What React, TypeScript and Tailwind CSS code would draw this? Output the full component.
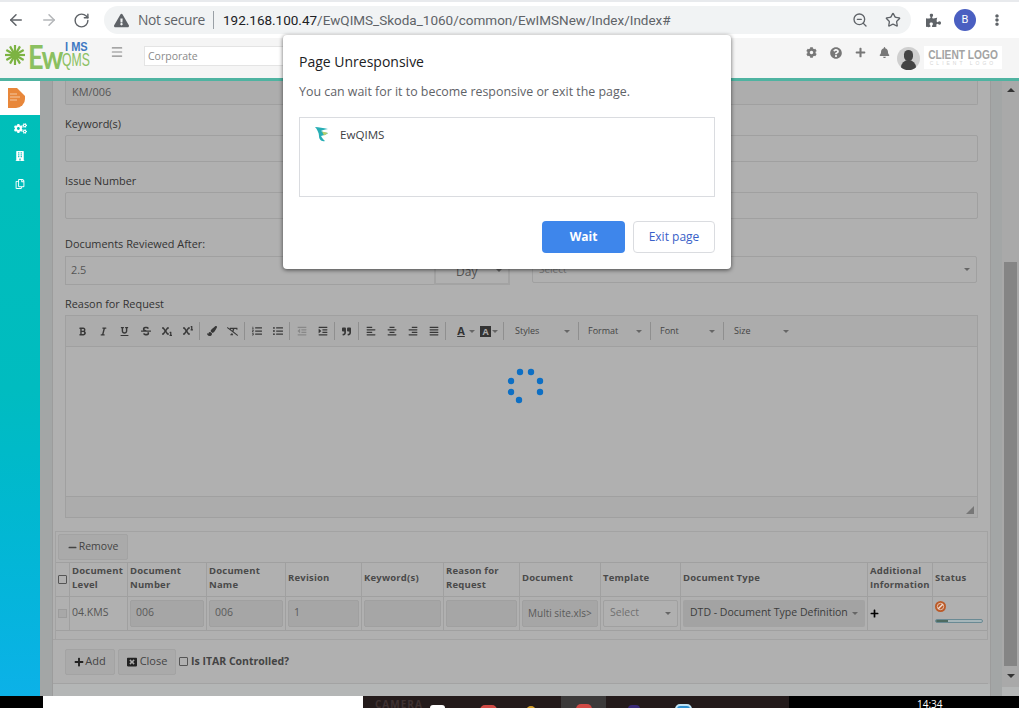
import React from "react";
import { ArrowLeft, ArrowRight, RotateCw, ZoomOut, Star, Menu } from "lucide-react";
import {
  FaCog, FaCogs, FaBuilding, FaRegCopy, FaQuestionCircle, FaPlus, FaBell, FaBold, FaItalic, FaUnderline,
  FaStrikethrough, FaSubscript, FaSuperscript, FaPaintBrush, FaRemoveFormat, FaListOl, FaListUl, FaOutdent,
  FaIndent, FaQuoteRight, FaAlignLeft, FaAlignCenter, FaAlignRight, FaAlignJustify, FaMinus, FaWindowClose,
  FaPuzzlePiece, FaExclamationTriangle, FaEllipsisV,
} from "react-icons/fa";

const Caret = ({ className = "" }: { className?: string }) => (
  <span className={"inline-block w-0 h-0 border-x-[3px] border-x-transparent border-t-[3px] border-t-[#666] " + className} />
);

const Sep = () => <span className="w-px h-[18px] bg-[#8f8f8f] mx-[1px]" />;

const Tool = ({ children }: { children: React.ReactNode }) => (
  <span className="w-[21px] flex justify-center text-[#383838]">{children}</span>
);

const Combo = ({ label, cls }: { label: string; cls: string }) => (
  <span className={"flex items-center justify-between pr-[7px] text-[9px] text-[#444] " + cls}>
    {label}
    <Caret />
  </span>
);

const Head = ({ w, children }: { w: string; children?: React.ReactNode }) => (
  <div className={"shrink-0 flex items-center px-[2px] pb-[3px] border-r border-[#a0a0a0] text-[9.5px] leading-[14px] font-bold text-[#4a4a4a] tracking-[0.2px] " + w}>
    <span>{children}</span>
  </div>
);

const Cell = ({ w, children }: { w: string; children?: React.ReactNode }) => (
  <div className={"shrink-0 flex items-center px-[2px] pb-[1px] border-r border-[#a0a0a0] " + w}>{children}</div>
);

const Disabled = ({ children }: { children?: React.ReactNode }) => (
  <div className="w-full h-[27px] rounded-[2px] bg-[#a6a6a6] border border-[#a0a0a0] px-[5px] flex items-center text-[#5a5a5a] overflow-hidden whitespace-nowrap">
    {children}
  </div>
);

export default function App() {
  return (
    <div className="relative w-[1019px] h-[708px] overflow-hidden flex flex-col bg-white font-['Open_Sans',sans-serif]">
      {/* Browser toolbar */}
      <div className="h-[2px] bg-[#e8eaed]" />
      <div className="h-[36px] bg-white flex items-center">
        <ArrowLeft size={18} strokeWidth={2} className="ml-[7px] text-[#5f6368]" />
        <ArrowRight size={18} strokeWidth={2} className="ml-[15px] text-[#b4b6b9]" />
        <RotateCw size={17} strokeWidth={2} className="ml-[15px] text-[#5f6368]" />
        <div className="ml-[14px] w-[807px] h-[28px] rounded-full bg-[#f1f3f4] flex items-center pl-[10px] pr-[8px]">
          <FaExclamationTriangle size={15} className="text-[#5f6368]" />
          <span className="ml-[9px] text-[13.8px] text-[#5f6368] font-['Open_Sans',sans-serif] tracking-[-0.3px]">Not secure</span>
          <span className="ml-[8px] mr-[9px] w-px h-[18px] bg-[#9aa0a6]" />
          <span className="text-[13.5px] text-[#5f6368] font-['Roboto',sans-serif] whitespace-nowrap">
            <span className="text-[#202124]">192.168.100.47</span>/EwQIMS_Skoda_1060/common/EwIMSNew/Index/Index#
          </span>
          <ZoomOut size={16} className="ml-auto text-[#5f6368]" />
          <Star size={16} strokeWidth={2} className="ml-[17px] mr-[2px] text-[#5f6368]" />
        </div>
        <FaPuzzlePiece size={15} className="ml-[15px] text-[#5f6368]" />
        <div className="ml-[13px] w-[22px] h-[22px] rounded-full bg-[#4a5fc1] text-white text-[11px] flex items-center justify-center font-['Roboto',sans-serif]">B</div>
        <FaEllipsisV size={12} className="ml-[15px] text-[#5f6368]" />
      </div>

      {/* App header */}
      <div className="h-[43px] bg-[#f5f5f5] border-b-[3px] border-[#4fb3a1] flex items-start shrink-0">
        <div className="relative w-[100px] h-[40px] overflow-hidden">
          <svg width="26" height="26" viewBox="-13 -13 26 26" className="absolute left-[2px] top-[4px]">
            {[0, 30, 60, 90, 120, 150].map((a) => (
              <line key={a} x1="0" y1="-10" x2="0" y2="10" stroke="#7cb342" strokeWidth="2.2" transform={`rotate(${a})`} />
            ))}
            <circle r="4" fill="#7cb342" />
          </svg>
          <span className="absolute left-[28px] top-[0px] text-[32px] leading-[38px] text-[#8bc061] font-['Lato',sans-serif] font-bold tracking-[-2px] scale-x-[0.85] origin-left">Ew</span>
          <span className="absolute left-[65px] top-[3px] h-[11px] text-[13px] leading-[11px] font-bold text-[#3d78c2] font-['Liberation_Sans',sans-serif] scale-x-[0.85] origin-left whitespace-pre">I MS</span>
          <span className="absolute left-[62px] top-[14px] h-[16px] text-[18px] leading-[16px] text-[#8bc061] font-['Liberation_Sans',sans-serif] scale-x-[0.68] origin-left">QMS</span>
        </div>
        <Menu size={14} strokeWidth={2} className="ml-[10px] mt-[7px] text-[#8a8a8a]" />
        <div className="ml-[20px] mt-[8px] w-[150px] h-[20px] bg-white border border-[#e4e4e4] flex items-center pl-[3px] pt-[1px] text-[10.5px] text-[#8a8a8a]">Corporate</div>
        <div className="ml-auto flex items-start">
          <FaCog size={11} className="mt-[9px] text-[#777]" />
          <FaQuestionCircle size={12} className="ml-[13px] mt-[9px] text-[#777]" />
          <FaPlus size={11} className="ml-[13px] mt-[9px] text-[#777]" />
          <FaBell size={11} className="ml-[13px] mt-[9px] text-[#777]" />
          <div className="ml-[7px] mt-[9px] w-[23px] h-[23px] rounded-full bg-[#cfcfcf] overflow-hidden relative">
            <span className="absolute left-[7px] top-[3px] w-[9px] h-[11px] rounded-full bg-[#444]" />
            <span className="absolute left-[4px] top-[13px] w-[15px] h-[12px] rounded-t-full bg-[#444]" />
          </div>
          <div className="ml-[4px] mr-[17px] mt-[8px] w-[78px] h-[23px] bg-white flex flex-col items-center justify-center font-['Liberation_Sans',sans-serif] text-[#a3a3a3]">
            <span className="text-[12px] leading-[12px] font-bold scale-x-[0.85] whitespace-nowrap">CLIENT LOGO</span>
            <span className="text-[5px] leading-[5px] tracking-[3px] text-[#d5d5d5] whitespace-nowrap">CLIENT LOGO</span>
          </div>
        </div>
      </div>

      {/* Body */}
      <div className="flex h-[615px] shrink-0">
        <div className="w-[40px] shrink-0 bg-gradient-to-b from-[#00bfb8] via-[#00bcc0] to-[#0cb1e8] flex flex-col items-center">
          <div className="w-full h-[34px] bg-white flex items-center justify-center pr-[7px]">
            <svg width="17" height="20" viewBox="0 0 17 20">
              <path d="M0 0h9l8 8v3a9 9 0 0 1-9 9H0z" fill="#e8873a" />
              <path d="M2 6h7M2 9h10M2 12h7" stroke="#f4c9a4" strokeWidth="1.2" />
            </svg>
          </div>
          <FaCogs size={13} className="mt-[7px] text-white" />
          <FaBuilding size={10} className="mt-[16px] text-white" />
          <FaRegCopy size={10} className="mt-[18px] text-white" />
        </div>

        <div className="w-[13px] shrink-0 bg-[#a3a6a6] border-r border-[#9c9c9c]" />

        <div className="w-[937px] shrink-0 bg-[#b0b0b0] flex flex-col text-[10.9px] text-[#333]">
          <div className="mx-[12px] h-[24px] border-x border-b border-[#a0a0a0] rounded-b-[2px] bg-[#adadad] flex items-center px-[6px] text-[#555]">KM/006</div>
          <div className="mx-[12px] mt-[12px] h-[14px] leading-[14px]">Keyword(s)</div>
          <div className="mx-[12px] mt-[4px] h-[27px] border border-[#a0a0a0] rounded-[2px]" />
          <div className="mx-[12px] mt-[12px] h-[14px] leading-[14px]">Issue Number</div>
          <div className="mx-[12px] mt-[4px] h-[27px] border border-[#a0a0a0] rounded-[2px]" />
          <div className="mx-[12px] mt-[18px] h-[14px] leading-[14px]">Documents Reviewed After:</div>
          <div className="mx-[12px] mt-[5px] flex items-start">
            <div className="w-[369px] h-[29px] border border-[#a0a0a0] border-r-0 flex items-center px-[5px] text-[#555]">2.5</div>
            <div className="w-[76px] h-[29px] border-2 border-[#a3a3a3] flex items-center justify-between pl-[20px] pr-[6px] text-[#555] text-[12px]">
              <span className="pt-[2px]">Day</span> <Caret />
            </div>
            <div className="ml-[22px] w-[445px] h-[27px] border border-[#a0a0a0] rounded-[2px] flex items-center justify-between px-[6px] text-[#7a7a7a] text-[10px]">
              Select <Caret />
            </div>
          </div>
          <div className="mx-[12px] mt-[12px] h-[14px] leading-[14px]">Reason for Request</div>
          {/* Editor */}
          <div className="mx-[12px] mt-[4px] h-[203px] border border-[#a0a0a0] flex flex-col shrink-0">
            <div className="h-[31px] border-b border-[#a0a0a0] flex items-center pl-[6px] bg-[#acacac]">
              <Tool><FaBold size={9} /></Tool>
              <Tool><FaItalic size={9} /></Tool>
              <Tool><FaUnderline size={9} /></Tool>
              <Tool><FaStrikethrough size={10} /></Tool>
              <Tool><FaSubscript size={10} /></Tool>
              <Tool><FaSuperscript size={10} /></Tool>
              <Sep />
              <Tool><FaPaintBrush size={10} /></Tool>
              <Tool><FaRemoveFormat size={11} /></Tool>
              <Sep />
              <Tool><FaListOl size={10} /></Tool>
              <Tool><FaListUl size={10} /></Tool>
              <Sep />
              <Tool><FaOutdent size={10} className="opacity-30" /></Tool>
              <Tool><FaIndent size={10} /></Tool>
              <Sep />
              <Tool><FaQuoteRight size={9} /></Tool>
              <Sep />
              <Tool><FaAlignLeft size={10} /></Tool>
              <Tool><FaAlignCenter size={10} /></Tool>
              <Tool><FaAlignRight size={10} /></Tool>
              <Tool><FaAlignJustify size={10} /></Tool>
              <Sep />
              <span className="ml-[7px] w-[14px] text-center text-[11px] font-bold underline text-[#333]">A</span>
              <Caret className="ml-[1px]" />
              <span className="ml-[5px] w-[11px] h-[11px] bg-[#333] text-[#aaa] text-[9px] leading-[11px] text-center font-bold">A</span>
              <Caret className="ml-[1px] mr-[4px]" />
              <Sep />
              <Combo label="Styles" cls="w-[72px] pl-[10px]" />
              <Sep />
              <Combo label="Format" cls="w-[69px] pl-[8px]" />
              <Sep />
              <Combo label="Font" cls="w-[70px] pl-[8px]" />
              <Sep />
              <Combo label="Size" cls="w-[71px] pl-[9px]" />
            </div>
            <div className="h-[150px] border-b border-[#a0a0a0]" />
            <div className="flex-1 flex items-end justify-end p-[3px] bg-[#acacac]">
              <svg width="8" height="8" viewBox="0 0 8 8"><path d="M8 0L0 8h8z" fill="#777" /></svg>
            </div>
          </div>
          {/* Table panel */}
          <div className="mx-[2px] mt-[13px] h-[109px] border-y border-x border-[#a3a3a3] flex flex-col shrink-0">
            <div className="pl-[2px] pt-[2px] h-[30px] shrink-0">
              <div className="w-[70px] h-[26px] border border-[#a3a3a3] bg-[#aaaaaa] rounded-[2px] flex items-center justify-center gap-[2px] text-[10.5px] text-[#444]">
                <FaMinus size={9} /> Remove
              </div>
            </div>
            <div className="h-[34px] flex border-t border-[#a0a0a0] shrink-0">
              <Cell w="w-[14px] justify-center"><span className="w-[9px] h-[9px] border border-[#555] rounded-[1px]" /></Cell>
              <Head w="w-[58px]">Document<br />Level</Head>
              <Head w="w-[79px]">Document<br />Number</Head>
              <Head w="w-[79px]">Document<br />Name</Head>
              <Head w="w-[76px]">Revision</Head>
              <Head w="w-[82px]">Keyword(s)</Head>
              <Head w="w-[76px]">Reason for<br />Request</Head>
              <Head w="w-[81px]">Document</Head>
              <Head w="w-[80px]">Template</Head>
              <Head w="w-[187px]">Document Type</Head>
              <Head w="w-[65px]">Additional<br />Information</Head>
              <Head w="w-[55px]">Status</Head>
            </div>
            <div className="h-[35px] flex border-y border-[#a0a0a0] shrink-0 text-[10.5px] text-[#555]">
              <Cell w="w-[14px] justify-center"><span className="w-[9px] h-[9px] border border-[#9c9c9c] bg-[#a8a8a8]" /></Cell>
              <Cell w="w-[58px]">04.KMS</Cell>
              <Cell w="w-[79px]"><Disabled>006</Disabled></Cell>
              <Cell w="w-[79px]"><Disabled>006</Disabled></Cell>
              <Cell w="w-[76px]"><Disabled>1</Disabled></Cell>
              <Cell w="w-[82px]"><Disabled /></Cell>
              <Cell w="w-[76px]"><Disabled /></Cell>
              <Cell w="w-[81px]"><Disabled><span className="text-[10px]">Multi site.xls&gt;</span></Disabled></Cell>
              <Cell w="w-[80px]">
                <div className="w-full h-[27px] border border-[#a0a0a0] rounded-[2px] flex items-center justify-between px-[6px] text-[#707070]">Select <Caret /></div>
              </Cell>
              <Cell w="w-[187px]">
                <div className="w-full h-[27px] bg-[#a3a3a3] rounded-[2px] flex items-center justify-between px-[7px] text-[#3c3c3c] whitespace-nowrap">DTD - Document Type Definition <Caret /></div>
              </Cell>
              <Cell w="w-[65px]"><FaPlus size={9} className="text-black" /></Cell>
              <Cell w="w-[55px]">
                <div className="flex flex-col gap-[7px] mb-[3px]">
                  <svg width="11" height="11" viewBox="0 0 11 11">
                    <circle cx="5.5" cy="5.5" r="5.5" fill="#bb5a28" />
                    <circle cx="5.5" cy="5.5" r="3.2" fill="none" stroke="#e5c2ae" strokeWidth="1" />
                    <line x1="3.2" y1="7.8" x2="7.8" y2="3.2" stroke="#f2e2d8" strokeWidth="1.4" />
                  </svg>
                  <div className="w-[48px] h-[4px] rounded-full border border-[#6a8a94] bg-[#a6b6ba] overflow-hidden">
                    <div className="w-[12px] h-full bg-[#4d6a60]" />
                  </div>
                </div>
              </Cell>
            </div>
          </div>
          {/* Footer */}
          <div className="mr-[2px] h-[45px] border-y border-[#a3a3a3] flex items-center pl-[12px] shrink-0 mt-[-1px]">
            <div className="w-[50px] h-[26px] border border-[#a3a3a3] bg-[#aaaaaa] rounded-[2px] flex items-center justify-center gap-[1px] text-[11px] text-[#444]">
              <FaPlus size={10} className="text-[#222]" /> Add
            </div>
            <div className="ml-[3px] w-[58px] h-[26px] border border-[#a3a3a3] bg-[#aaaaaa] rounded-[2px] flex items-center justify-center gap-[3px] text-[11px] text-[#444]">
              <FaWindowClose size={10} className="text-[#222]" /> Close
            </div>
            <span className="ml-[3px] w-[9px] h-[9px] border border-[#555] rounded-[1px]" />
            <span className="ml-[3px] text-[10.5px] font-bold text-[#444]">Is ITAR Controlled?</span>
          </div>
          <div className="flex-1 bg-[#b4b6b6]" />
        </div>

        <div className="w-[12px] shrink-0 bg-[#a3a6a6] border-l border-[#9c9c9c]" />
        {/* Scrollbar */}
        <div className="w-[17px] shrink-0 bg-[#a9a9a9] flex flex-col items-center">
          <span className="mt-[7px] w-0 h-0 border-x-[4px] border-x-transparent border-b-[4px] border-b-[#333]" />
          <div className="mt-[170px] w-[13px] h-[404px] bg-[#858585]" />
          <span className="mt-[8px] w-0 h-0 border-x-[4px] border-x-transparent border-t-[4px] border-t-[#333]" />
          <div className="mt-[9px] w-full flex-1 bg-[#b4b6b6]" />
        </div>
      </div>

      {/* Taskbar */}
      <div className="h-[12px] shrink-0 flex bg-black relative overflow-hidden">
        <div className="w-[43px]" />
        <div className="w-[320px] bg-white" />
        <div className="w-[426px] bg-[#241b1b] relative">
          <span className="absolute left-[12px] top-[2px] text-[10px] leading-[12px] font-bold tracking-[1px] text-[#3f3232]">CAMERA</span>
          <span className="absolute left-[67px] top-[9px] w-[15px] h-[6px] rounded-t-[3px] bg-white" />
          <span className="absolute left-[117px] top-[9px] w-[17px] h-[10px] rounded-full bg-[#d04a45]" />
          <span className="absolute left-[163px] top-[10px] w-[10px] h-[6px] rounded-t-full bg-[#d6a02a]" />
          <span className="absolute left-[198px] top-0 w-[45px] h-full bg-[#3c3a3a]" />
          <span className="absolute left-[213px] top-[8px] w-[16px] h-[10px] rounded-full bg-[#d04a45]" />
          <span className="absolute left-[265px] top-[9px] w-[12px] h-[8px] rounded-full bg-[#3a2a78]" />
          <span className="absolute left-[312px] top-[8px] w-[17px] h-[10px] rounded-full border-2 border-[#bfe3f5] bg-[#2f8fcf]" />
        </div>
        <span className="absolute left-[917px] top-[2px] text-[10px] leading-[12px] text-white">14:34</span>
      </div>

      {/* Spinner */}
      <svg width="40" height="40" viewBox="0 0 40 40" className="absolute left-[505px] top-[366px]">
        {[[15, 6], [26, 6], [6, 15], [35, 15], [6, 26], [35, 26], [14, 34]].map(([x, y]) => (
          <circle key={`${x}-${y}`} cx={x} cy={y} r="3.2" fill="#0d6fc4" />
        ))}
      </svg>

      {/* Page Unresponsive dialog */}
      <div className="absolute left-[283px] top-[35px] w-[448px] h-[234px] bg-white rounded-[4px] shadow-[0_1px_4px_rgba(0,0,0,0.6)] px-[16px] pt-[17px]">
        <div className="text-[14px] leading-[20px] text-[#202124]">Page Unresponsive</div>
        <div className="mt-[11px] text-[12.4px] leading-[18px] text-[#5f6368]">You can wait for it to become responsive or exit the page.</div>
        <div className="mt-[16px] h-[80px] border border-[#dadce0] flex items-start pl-[14px] pt-[8px]">
          <svg width="15" height="16" viewBox="0 0 15 16">
            <path d="M1 1c4 0 8 1 13 2-4 1-6 1-7 2 2 1 5 2 7 2-2 2-5 2-7 3 1 2 2 3 4 5-4 1-6-2-6-5C5 7 3 3 1 1z" fill="#27aeb5" />
            <path d="M8 5.5l6 1.5-4 2.5z" fill="#b9cf6a" />
          </svg>
          <span className="ml-[11px] text-[11.6px] leading-[18px] text-[#3c4043]">EwQIMS</span>
        </div>
        <div className="mt-[24px] flex justify-end gap-[8px]">
          <div className="w-[83px] h-[32px] rounded-[4px] bg-[#3e86eb] text-white text-[12px] font-bold flex items-center justify-center">Wait</div>
          <div className="w-[82px] h-[32px] rounded-[4px] bg-white border border-[#dadce0] text-[#3a5fc8] text-[12px] flex items-center justify-center">Exit page</div>
        </div>
      </div>
    </div>
  );
}
